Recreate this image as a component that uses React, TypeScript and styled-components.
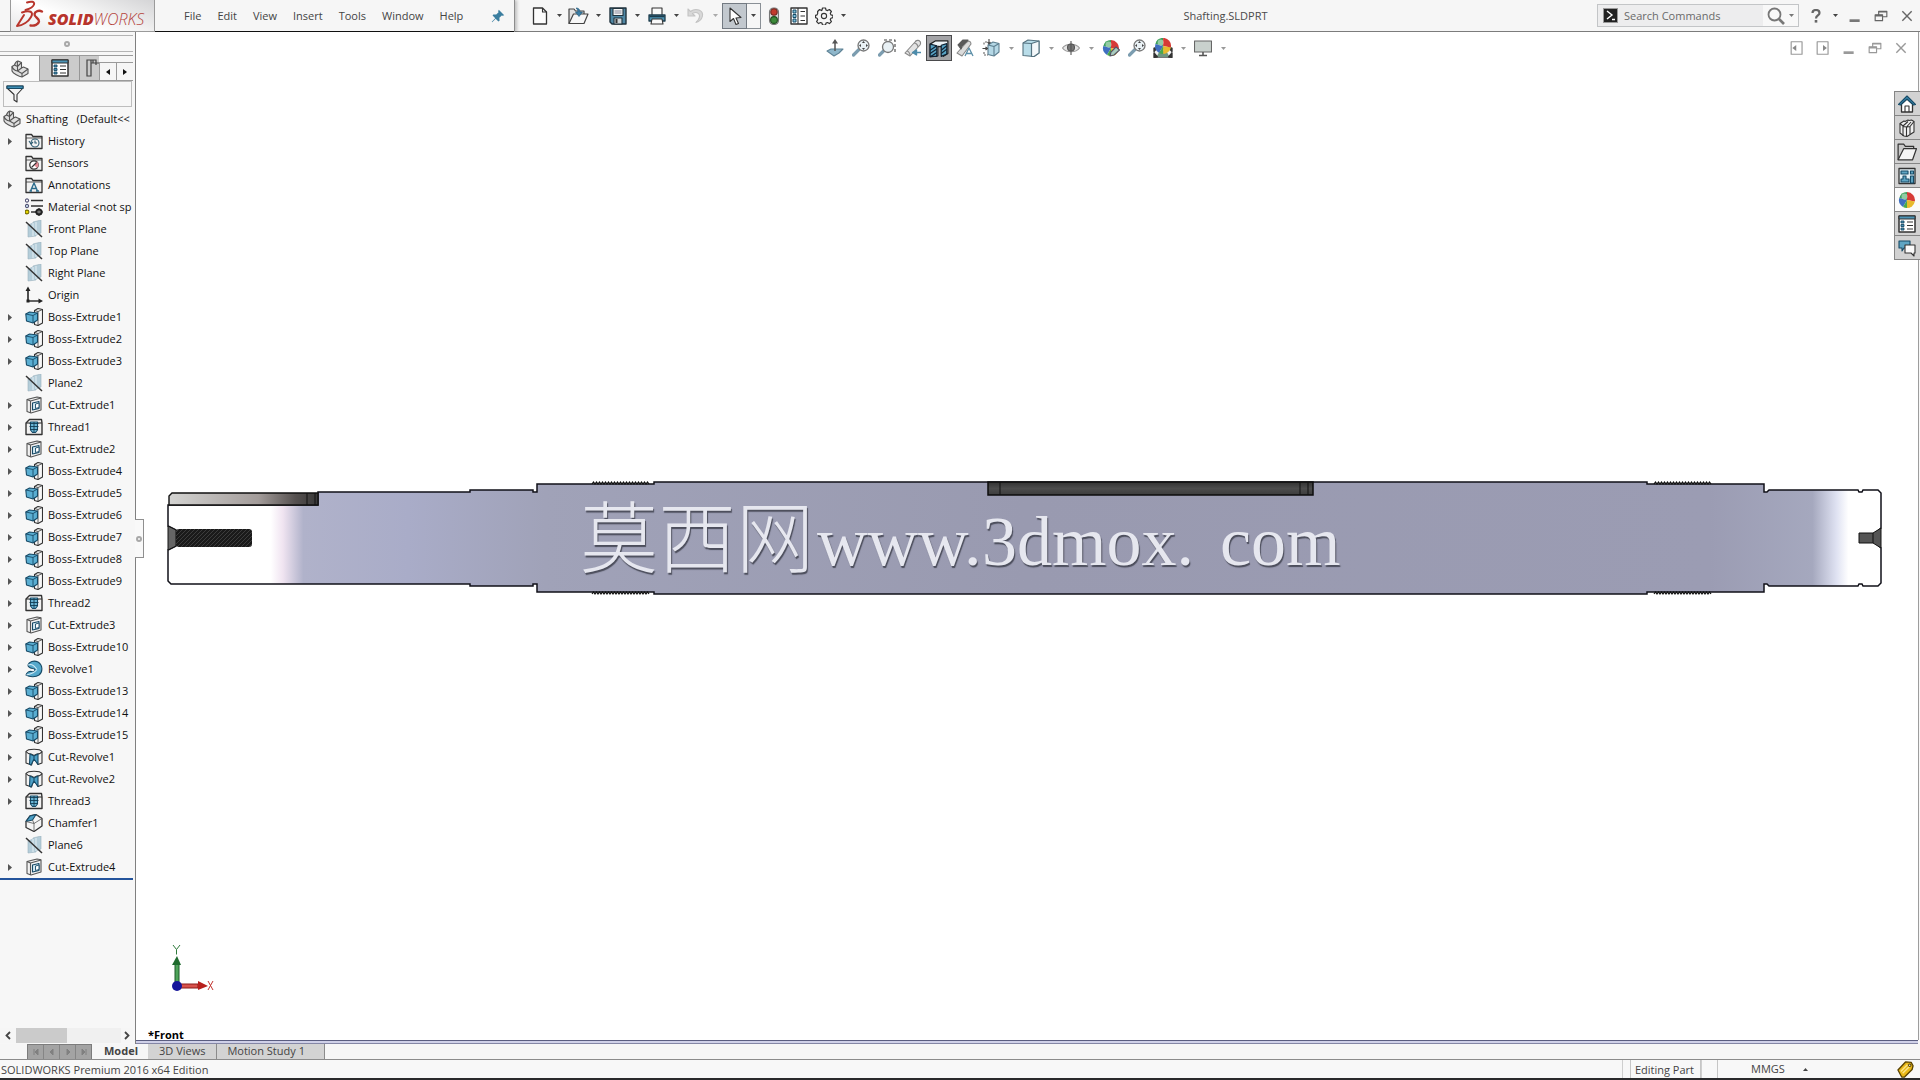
import React from "react";
import styled, { createGlobalStyle, css } from "styled-components";

const GlobalStyle = createGlobalStyle`
  * { box-sizing: border-box; }
  html, body { margin: 0; padding: 0; }
  body {
    background: #f7f7f7;
    color: #1c1c1c;
    font-family: "Open Sans", "Noto Sans", sans-serif;
    font-size: 11px;
    line-height: 16px;
    overflow: hidden;
  }
  button, input { font: inherit; color: inherit; }
  svg { display: block; flex: none; }
`;

/* ---------- shell ---------- */

const Shell = styled.div`
  display: flex;
  flex-direction: column;
  height: 100vh;
  border-bottom: 2px solid #2a2a2c;
`;

const TopBar = styled.header`
  display: flex;
  align-items: stretch;
  height: 32px;
  background: #f6f6f6;
  border-bottom: 1px solid #7c7c7c;
  flex: none;
`;

const MenuPanel = styled.div`
  display: flex;
  align-items: stretch;
  width: 515px;
  margin-bottom: -1px;
  padding-left: 10px;
  border-right: 1px solid #8c8c8c;
  box-shadow: 2px 0 3px rgba(0, 0, 0, 0.22);
  flex: none;
`;

const Brand = styled.div`
  width: 145px;
  border: solid #9a9a9a;
  border-width: 0 1px 1px;
  background: linear-gradient(200deg, #d4d4d6 0%, #f2f2f2 40%, #ffffff 60%, #e6e6e7 100%);
  flex: none;
`;

const MenuList = styled.nav`
  display: flex;
  align-items: center;
  flex: 1;
  padding-left: 21px;
  border-bottom: 1px solid #101010;
`;

const PlainButton = styled.button`
  display: flex;
  align-items: center;
  justify-content: center;
  padding: 0;
  border: 0;
  background: transparent;
`;

const MenuButton = styled(PlainButton)`
  padding: 0 8px;
  color: #444;
`;

const PinButton = styled(PlainButton)`
  width: 26px;
  margin-left: 14px;
`;

const QuickBar = styled.div`
  display: flex;
  align-items: center;
  padding-left: 12px;
  flex: 1;
`;

const ToolButton = styled(PlainButton)<{ $active?: boolean }>`
  width: 25px;
  height: 26px;
  ${(p) => p.$active && css`
    background: #c2c8ce;
    border: 1px solid #737a82;
  `}
`;

const CaretButton = styled(PlainButton)<{ $boxed?: boolean }>`
  width: 14px;
  height: 26px;
  ${(p) => p.$boxed && css`
    border: 1px solid #8a9096;
    border-left: 0;
  `}
`;

const DocTitle = styled.h1`
  margin: 0;
  padding-left: 4px;
  width: 830px;
  font-size: 11px;
  font-weight: 400;
  line-height: 31px;
  color: #4a4a4a;
  flex: 0 1 auto;
  text-align: center;
`;

const TopRight = styled.div`
  display: flex;
  align-items: center;
  justify-content: flex-end;
  flex: 1;
`;

const SearchBox = styled.label`
  display: flex;
  align-items: center;
  width: 202px;
  height: 23px;
  padding-left: 5px;
  border: 1px solid #c3c5c7;
  background: #ededee;
  margin-right: 4px;
`;

const SearchInput = styled.input`
  flex: 1;
  min-width: 0;
  padding: 0 0 0 6px;
  border: 0;
  outline: 0;
  background: transparent;
  &::placeholder { color: #6a6a6a; opacity: 1; }
`;

const SearchGo = styled(PlainButton)`
  height: 21px;
  padding: 0 4px;
  gap: 4px;
  background: #f8f8f8;
`;

const WindowButton = styled(PlainButton)<{ $w?: number }>`
  width: ${(p) => p.$w ?? 26}px;
  height: 26px;
`;

/* ---------- body ---------- */

const Body = styled.div`
  display: flex;
  flex: 1;
  min-height: 0;
`;

const SidePanel = styled.aside`
  display: flex;
  flex-direction: column;
  width: 136px;
  margin-bottom: -4px;
  border-right: 1px solid #808080;
  padding-right: 2px;
  background: #f7f7f7;
  flex: none;
`;

const PanelGrip = styled.div`
  display: flex;
  align-items: center;
  justify-content: center;
  height: 17px;
  margin: 3px 0;
  border: solid #b4b4b4;
  border-width: 1px 0;
  flex: none;
`;

const GripDot = styled.span`
  width: 6px;
  height: 6px;
  border: 2px solid #a8a8a8;
  border-radius: 50%;
`;

const PanelTabs = styled.div`
  display: flex;
  height: 26px;
  border-top: 1px solid #9b9b9b;
  flex: none;
`;

const PanelTab = styled(PlainButton)<{ $selected?: boolean }>`
  width: ${(p) => (p.$selected ? 39 : 40)}px;
  background: ${(p) => (p.$selected ? "#f9f9f9" : "#cbcbcb")};
  ${(p) => !p.$selected && css`
    border-left: 1px solid #969696;
    border-bottom: 1px solid #969696;
  `}
`;

const CutTab = styled(PanelTab)`
  width: 20px;
  justify-content: flex-end;
  overflow: hidden;
`;

const TabScroll = styled.div`
  display: flex;
  flex: 1;
  margin-top: 6px;
  border: solid #9a9a9a;
  border-width: 1px 0;
`;

const TabScrollButton = styled(PlainButton)`
  flex: 1;
  border-left: 1px solid #9a9a9a;
  background: #f6f6f6;
`;

const FilterBox = styled.label`
  display: flex;
  align-items: center;
  height: 26px;
  margin: 0 1px 1px 3px;
  padding-left: 2px;
  border: 1px solid #bdbdbd;
  flex: none;
`;

const FilterInput = styled.input`
  flex: 1;
  min-width: 0;
  border: 0;
  outline: 0;
  background: transparent;
`;

const Tree = styled.ul`
  margin: 0;
  padding: 0;
  list-style: none;
  border-bottom: 2px solid #24549c;
  overflow: hidden;
  flex: none;
`;

const TreeRow = styled.li<{ $root?: boolean }>`
  display: flex;
  align-items: center;
  height: 22px;
  padding-left: ${(p) => (p.$root ? 3 : 5)}px;
  white-space: pre;
  gap: 5px;
  color: #111;
`;

const Twisty = styled(PlainButton)`
  width: 15px;
  height: 16px;
  justify-content: flex-start;
  padding-left: 3px;
  flex: none;
`;

const HScroll = styled.div`
  display: flex;
  height: 15px;
  margin-top: auto;
  margin-bottom: 1px;
  background: #f0f0f0;
  flex: none;
`;

const HScrollThumb = styled.div`
  width: 51px;
  background: #cbcbcb;
  margin-right: auto;
`;

const HScrollButton = styled(PlainButton)`
  width: 16px;
  background: #f6f6f6;
  &:last-child { width: 12px; }
`;

const Viewport = styled.main`
  position: relative;
  flex: 1;
  min-width: 0;
  margin-right: 1px;
  border-right: 1px solid #9d9d9d;
  background: #fff;
`;

const Model = styled.svg`
  width: 100%;
  height: 100%;
`;

const Watermark = styled.g`
  fill: #e6e7ef;
  text-shadow: 1px 2px 1px #4c4e5c;
`;

const HudBar = styled.div`
  position: absolute;
  top: 3px;
  left: 0;
  right: 2px;
  display: flex;
  justify-content: center;
`;

const HudButton = styled(PlainButton)<{ $active?: boolean }>`
  width: 26px;
  height: 26px;
  ${(p) => p.$active && css`
    background: #a3a3a6;
    border: 1px solid #4a4a4c;
  `}
`;

const DocControls = styled.div`
  position: absolute;
  top: 3px;
  right: 4px;
  display: flex;
`;

const TaskTabs = styled.div`
  position: absolute;
  top: 59px;
  right: -2px;
  width: 26px;
  border: solid #858585;
  border-width: 1px 0 0 1px;
`;

const TaskTab = styled(PlainButton)<{ $selected?: boolean }>`
  width: 25px;
  height: 24px;
  padding-right: 2px;
  border-bottom: 1px solid #858585;
  background: ${(p) => (p.$selected ? "#fbfbfb" : "#d2d2d2")};
`;

const SideHandle = styled.button`
  position: absolute;
  left: -1px;
  top: calc(50% - 17px);
  width: 9px;
  height: 39px;
  padding: 0;
  display: flex;
  align-items: center;
  justify-content: center;
  border: 1px solid #8f8f8f;
  border-left: 0;
  background: #f9f9f9;
`;

const ViewName = styled.div`
  position: absolute;
  left: 12px;
  bottom: 0;
  font-weight: 700;
  line-height: 11px;
  color: #000;
`;

/* ---------- bottom ---------- */

const SplitLine = styled.div`
  height: 4px;
  margin: 0 2px 0 136px;
  border-top: 1px solid #5a5d80;
  border-bottom: 1px solid #8486a5;
  background: #cfd0e8;
  flex: none;
`;

const StudyTabs = styled.div`
  display: flex;
  height: 15px;
  padding-left: 27px;
  background: #f6f6f6;
  flex: none;
`;

const StudyNav = styled.div`
  display: flex;
  gap: 1px;
  width: 65px;
  border: 1px solid #7c7c7c;
  border-bottom-width: 0;
  background: #858585;
`;

const StudyNavButton = styled(PlainButton)`
  flex: 1;
  background: #a3a3a3;
`;

const StudyTab = styled(PlainButton)<{ $selected?: boolean }>`
  padding: 0 11px 2px;
  color: #444;
  ${(p) => p.$selected
    ? css`
        padding-left: 12px;
        padding-right: 10px;
        font-weight: 700;
      `
    : css`
        background: #d3d3d3;
        border-right: 1px solid #8b8b8b;
      `}
  &:last-child { padding-right: 19px; padding-left: 10px; }
`;

const StatusBar = styled.footer`
  display: flex;
  align-items: stretch;
  height: 19px;
  padding-left: 1px;
  border-top: 1px solid #8b8b8b;
  line-height: 20px;
  color: #444;
  background: #f8f8f8;
  flex: none;
`;

const StatusText = styled.span`
  flex: 1;
`;

const StatusCell = styled.span`
  padding: 0 6px 0 4px;
  border: solid #c6c6c6;
  border-width: 0 1px;
`;

const StatusGap = styled.span<{ $w: number }>`
  width: ${(p) => p.$w}px;
  border-left: 1px solid #cfcfcf;
`;

const UnitsButton = styled(PlainButton)`
  width: 124px;
  gap: 18px;
  border-left: 1px solid #c6c6c6;
`;

const TagButton = styled(PlainButton)`
  width: 22px;
  margin: 0 4px 0 53px;
`;

/* ---------- icons ---------- */

type Draw = { children: React.ReactNode; s?: number };
const Ico = ({ children, s = 18 }: Draw) => (
  <svg width={s} height={s} viewBox="0 0 18 18" fill="none" stroke="#333" strokeWidth="1.1" strokeLinejoin="round" aria-hidden="true">
    {children}
  </svg>
);

const Caret = ({ color = "#444", up = false }: { color?: string; up?: boolean }) => (
  <svg width="5" height="3" viewBox="0 0 5 3" aria-hidden="true">
    <path d={up ? "M0 3h5L2.500 0z" : "M0 0h5L2.500 3z"} fill={color} />
  </svg>
);

const PartIcon = () => (
  <Ico>
    <path d="M1 6.500L3.500 5C4 3 5 1.500 7 1l3.500 1.500V8l2-1 4.500 2v4.500L11 17c-3-.5-9-3.500-10-6z" fill="#e0e0e0" stroke="#555" />
    <path d="M3.500 5l3 1.500v4.500M7 1c-1 1.500-1 3.500-.5 5.500l4-4M6.500 11l4-3M1 6.500c1 3 2 4 5.500 4.500l4.500 2.500V17M11 13.500l6-4.500" stroke="#555" />
  </Ico>
);

const FolderIcon = ({ children }: { children: React.ReactNode }) => (
  <Ico>
    <path d="M1 16.500V2.500h5.500L8 4.500h9v12z" fill="#f2f2f2" strokeWidth="1.300" />
    <path d="M1 6h16" strokeWidth="0.800" />
    {children}
  </Ico>
);

const HistoryIcon = () => (
  <FolderIcon>
    <circle cx="10" cy="11" r="4" stroke="#2d5a70" />
    <path d="M10 8.500V11h2M4 9l2 3 2-2" stroke="#2d5a70" />
  </FolderIcon>
);
const SensorIcon = () => (
  <FolderIcon>
    <circle cx="9" cy="11" r="4.200" stroke="#333" fill="#fff" strokeWidth="1.300" />
    <path d="M9 11l3-3.500A4.200 4.200 0 0 1 12 14z" fill="#e58a94" stroke="none" />
    <path d="M6.500 13.500l5-5" />
  </FolderIcon>
);
const AnnotIcon = () => (
  <FolderIcon>
    <path d="M5.500 15L9 7l3.500 8M7 12.500h4M4.500 15h2.500M11 15h3" stroke="#2c6c8c" strokeWidth="1.400" />
  </FolderIcon>
);
const MaterialIcon = () => (
  <Ico>
    <path d="M6 2.500h12M6 8h12M6 14h5" strokeWidth="1.600" />
    <circle cx="2" cy="2.500" r="1.600" fill="#fff" stroke="#557" />
    <circle cx="2" cy="8" r="1.600" fill="#cde6f2" stroke="#557" />
    <circle cx="2" cy="14" r="1.900" fill="#e6d600" stroke="#776d00" />
    <circle cx="14" cy="14" r="2.500" stroke="#222" strokeWidth="2.200" />
    <path d="M14 10v8M10 14h2M16 14h2" stroke="#222" strokeWidth="1.200" />
  </Ico>
);
const PlaneIcon = () => (
  <Ico>
    <path d="M3 5l5-2v-1l8-2v13l-5 2v1l-8 1z" fill="#b4cdd9" stroke="#98b0bd" strokeWidth="0.600" />
    <path d="M8 3v13M11 2v13" stroke="#e0ebf0" />
    <path d="M1 2l16 15" strokeWidth="1.500" />
  </Ico>
);
const OriginIcon = () => (
  <Ico>
    <path d="M3 4v11h12" strokeWidth="1.700" />
    <path d="M0.500 5L3 0.500 5.500 5zM13.500 12.500L18 15l-4.500 2.500z" fill="#222" stroke="none" />
    <rect x="1.500" y="13.500" width="3" height="3" fill="#222" stroke="none" />
  </Ico>
);
const BossIcon = () => (
  <Ico>
    <path d="M9.500 2.500L13 .5l4.500 1V15L13 17.500l-3.500-1z" fill="#f7f7f7" />
    <path d="M13 3.500l4.500-2M9.500 2.500l3.500 1v14" strokeWidth="0.800" />
    <path d="M0.800 6L4.500 4l8 1v7L8 15l-6.500-2z" fill="#5aaed2" stroke="#174a66" />
    <path d="M0.800 6L8 7.500V15M8 7.500L12.500 5" stroke="#174a66" strokeWidth="0.900" />
  </Ico>
);
const CutIcon = () => (
  <Ico>
    <path d="M2 3.500L12 1l4 .8V14L6 17l-4-1.500z" fill="#f2f2f2" stroke="#555" />
    <path d="M2 3.500L5.500 5 16 2M5.500 5v12" stroke="#555" />
    <path d="M7.500 7L14 5.500v7L7.500 14z" fill="#d5eaf3" stroke="#174a66" />
    <path d="M10.500 8L14 7v4.500l-3.500 1z" fill="#fff" stroke="#174a66" strokeWidth="0.900" />
  </Ico>
);
const ThreadIcon = () => (
  <Ico>
    <path d="M1 16.500V5l3.500-3.500h12L17 5v11.500z" fill="#f2f2f2" strokeWidth="1.400" />
    <path d="M1 5h16" />
    <path d="M5.500 4h7v8l-2 2.500h-3L5.500 12z" fill="#6bb6d6" stroke="#174a66" />
    <path d="M4.500 5.500h9M4.500 8.500h9M5 11.500h8M9 4v10" stroke="#123c52" strokeWidth="0.900" />
  </Ico>
);
const RevolveIcon = () => (
  <Ico>
    <path d="M3 5C4 1.500 9 0 13 2c5 3 5 10 1 13-3.500 2.500-9.500 2-13 0 .5-2.500 3-4 5.500-3.500 2 .5 3.500 0 3.500-1.500 0-1-1-1.500-2.500-1.500C5 8 3 7 3 5z" fill="#56a9cc" stroke="#174a66" />
    <path d="M3 5c3-1.500 6 0 9 4.500M1.500 15c4-1 8-2 10-5" stroke="#cfeaf6" />
  </Ico>
);
const CutRevolveIcon = () => (
  <Ico>
    <path d="M1 3.500C3 .5 15 .5 17 3.500V15l-4 1.500L9 9l-2.500 8L1 15z" fill="#f2f2f2" />
    <path d="M1 3.500c1.500 2 4 2.500 5 2.500l3 1.500L12 6c2 0 4-.5 5-2.500" />
    <path d="M5 6l4 2v3l-3 6-1.500-1zM13 6L9 8v3l4 5.500z" fill="#4da0c6" stroke="#174a66" />
  </Ico>
);
const ChamferIcon = () => (
  <Ico>
    <path d="M1 7.500L5 2l6-1.500 6 4V12l-8 5.500-8-4z" fill="#f5f5f5" strokeWidth="1.300" />
    <path d="M1 7.500L5 2l6-1.500L7.500 6z" fill="#4da0c6" stroke="#174a66" />
    <path d="M11 .5l6 4-8 5-1.500-3.500M9 9.500v8M1 7.500l8 2" stroke="#555" strokeWidth="0.800" />
  </Ico>
);
const ListIcon = () => (
  <Ico>
    <rect x="1" y="1" width="16" height="16" fill="#fff" strokeWidth="1.500" />
    <rect x="1" y="1" width="16" height="3" fill="#4b94b6" strokeWidth="1" />
    <path d="M9 7h6M9 10.500h6M9 14h6" />
    <path d="M3 6h3v2H3zM3 9.500h3v2H3zM3 13h3v2H3z" fill="#4b94b6" stroke="#174a66" strokeWidth="0.900" />
  </Ico>
);
const OptionsIcon = () => (
  <Ico>
    <rect x="1" y="1" width="16" height="16" fill="#fff" strokeWidth="1.400" />
    <path d="M8 1v16M10.500 4.500h4.500M10.500 9h4.500M10.500 13.500h4.500" />
    <path d="M3 3h3v3H3zM3 7.500h3v3H3zM3 12h3v3H3z" fill="#7fc1db" stroke="#174a66" strokeWidth="1" />
  </Ico>
);
const FilterIcon = () => (
  <Ico>
    <path d="M1 1h16v2l-6 6.500V17l-3-2V9.500L1 3z" fill="#f4f4f4" />
    <path d="M1 1h16v2.500H1z" fill="#3f8fb5" stroke="#174a66" />
  </Ico>
);
const DimIcon = () => (
  <svg width="13" height="18" viewBox="0 0 13 18" fill="none" stroke="#444" strokeWidth="1.200" aria-hidden="true">
    <path d="M1 1h4v16H1zM5 4h8M5 1h5v5M7 1v3" />
  </svg>
);

const NewIcon = () => (
  <Ico>
    <path d="M2.500 1h9l4 4v12h-13z" fill="#fcfcfc" strokeWidth="1.300" />
    <path d="M11.500 1v4h4" />
  </Ico>
);
const OpenIcon = () => (
  <svg width="21" height="18" viewBox="0 0 21 18" fill="none" stroke="#444" strokeWidth="1.200" strokeLinejoin="round" aria-hidden="true">
    <path d="M1 16.500V2h5l1.500 2H16v4" fill="#e2e2e2" />
    <path d="M1 16.500L5.500 7H20l-4 9.500z" fill="#f7f7f7" />
    <path d="M8 1c3 0 4 2 4 4h2.500L11 9.500 7.500 5H10c0-2-1-3-2-4z" fill="#3b7ea6" stroke="#2a5f80" strokeWidth="0.700" />
  </svg>
);
const SaveIcon = () => (
  <Ico>
    <path d="M1 1h16v16H3l-2-2z" fill="#4f87a4" stroke="#20323d" strokeWidth="1.400" />
    <rect x="4" y="1.500" width="10" height="7" fill="#f5f5f5" stroke="#20323d" />
    <path d="M5.500 4h7M5.500 6h7" stroke="#889" />
    <rect x="5" y="11" width="8" height="6" fill="#cfd6da" stroke="#20323d" />
    <path d="M7.500 12v4" strokeWidth="2" />
  </Ico>
);
const PrintIcon = () => (
  <Ico>
    <path d="M4 8V1h10v7" fill="#fafafa" />
    <path d="M1 8h16v6H1z" fill="#4c92b2" stroke="#1d3c4c" strokeWidth="1.300" />
    <path d="M4 12h10l1 5H3z" fill="#fafafa" />
    <path d="M1.500 9.500h15" stroke="#1d3c4c" strokeWidth="1.500" />
  </Ico>
);
const UndoIcon = () => (
  <Ico>
    <path d="M1 2v7h7L5.500 6.500C10 4 15 7 11 13l-2 2.500c7-2 9-10 3-12.500C9 2 6 2.500 3.500 4.500z" fill="#d8d8d8" stroke="#c4c4c4" />
  </Ico>
);
const CursorIcon = () => (
  <Ico>
    <path d="M4 1v13.500l3.500-3 2.500 6 2.500-1-2.500-5.500 5-.5z" fill="#fff" stroke="#333" />
  </Ico>
);
const LightIcon = () => (
  <Ico>
    <rect x="4.500" y="1" width="9" height="16.500" rx="4" fill="#d6d6d6" stroke="#777" />
    <circle cx="9" cy="5" r="3.200" fill="#c33a2c" stroke="#70261e" />
    <circle cx="9" cy="13" r="3.400" fill="#3d8a3a" stroke="#1f4f1e" />
  </Ico>
);
const GearIcon = () => (
  <Ico>
    <path d="M7.500 1h3l.5 2 1.500.6 1.900-1.100 2 2-1.100 1.900.6 1.500 2 .5v2.200l-2 .6-.6 1.500 1.100 1.900-2 2-1.900-1.100-1.500.6-.5 2h-3l-.5-2-1.500-.6-1.900 1.100-2-2 1.100-1.900-.6-1.500-1.600-.6V8.400l1.600-.5.6-1.500L2.600 4.500l2-2 1.900 1.100L7 3z" strokeWidth="1.200" />
    <circle cx="9" cy="9" r="2.600" />
  </Ico>
);
const PinIcon = () => (
  <Ico s={14}>
    <path d="M10 1l7 7-2 .8-1.200-.5-3 3 .2 3.700-1.500 1L6 12.500 1.500 17 1 16.500 5.500 12 2 8.500l1-1.500 3.700.2 3-3L9.200 3z" fill="#3b7e9f" stroke="none" />
  </Ico>
);

const NormalToIcon = () => (
  <Ico>
    <path d="M1 12l4-2h12l-4 4L8 17z" fill="#8fb7cb" stroke="#5f8396" />
    <path d="M9 12V2" strokeWidth="1.500" stroke="#555" />
    <path d="M6 4.500L9 0l3 4.500z" fill="#555" stroke="none" />
  </Ico>
);
const Lens = ({ dashed = false }: { dashed?: boolean }) => (
  <Ico>
    {dashed && <path d="M6 1h11v12" stroke="#444" strokeDasharray="3 2" />}
    <path d="M1.500 16L7 10.500" stroke="#7c9db0" strokeWidth="3.200" strokeLinecap="round" />
    <circle cx={dashed ? 10 : 11.5} cy={dashed ? 8 : 6.5} r="5.500" fill="#e9f1f5" stroke="#777" strokeWidth="1.300" />
    {!dashed && <path d="M11.500 2l1.500 2h-3zM11.500 11l1.500-2h-3zM7 6.500l2-1.500v3zM16 6.500l-2-1.500v3z" fill="#444" stroke="none" />}
  </Ico>
);
const PrevViewIcon = () => (
  <Ico>
    <path d="M1 14L11 3c1-2 4-2 4.500-1 1.500 1 1 3 .5 4L6 17z" fill="#e3e3e3" stroke="#888" />
    <path d="M3 12c1 0 3 2 3 4M10 4c2 0 4 2 4 4" stroke="#888" />
    <path d="M17 13.500h-6M12.500 11l-4 2.500 4 2.500z" fill="#4d8cab" stroke="#4d8cab" strokeWidth="1.400" />
  </Ico>
);
const SectionIcon = () => (
  <Ico s={20}>
    <path d="M1 5.500l5-3h11V14l-4 2.500V8L8 7.500V16l-7 1z" fill="#eef3f6" stroke="#222" />
    <path d="M1 5.500L7 7v9.500H1zM11 6.500l5-1.500v9.500l-5 2z" fill="#58a3c4" stroke="#123" />
    <path d="M1 11l6-4M1 14l6-4M2 16.500l5-3.500M11 11l5-4M11 14l5-4" stroke="#123" />
  </Ico>
);
const AnnoViewIcon = () => (
  <Ico>
    <path d="M1 14L10 4c2-3 5-2 5 1L6 17z" fill="#dcdcdc" stroke="#888" />
    <path d="M2 6l5-5h5L6 7l-1 3z" fill="#5a5a5a" stroke="#5a5a5a" />
    <path d="M9 17l4-8 4 8M10.500 14.500h5" stroke="#5c8fa8" strokeWidth="1.300" />
  </Ico>
);
const OrientIcon = () => (
  <Ico>
    <path d="M6 6l5-3 6 1.500V13l-5 4-6-1.500z" fill="#b5d8e6" stroke="#5d7f90" />
    <path d="M6 6l6 1.500 5-3M12 7.500V17" stroke="#5d7f90" />
    <path d="M7 0v4M0.500 9.500h4M5.500 3L7 5l1.500-2M3.500 8l2 1.500-2 1.500" stroke="#444" />
    <path d="M2 3.500v3M2 13v3h4M3 3h3" stroke="#666" strokeDasharray="2 1" />
  </Ico>
);
const DisplayIcon = () => (
  <Ico>
    <path d="M1 4l5-3 11 1v12l-5 3.500-11-1z" fill="#b9dde9" stroke="#55727f" />
    <path d="M9.500 4.500L17 2v12l-5 3.500H9.500z" fill="#f4f8fa" stroke="#55727f" />
    <path d="M1 4l8.500.5v13" stroke="#55727f" />
  </Ico>
);
const EyeIcon = () => (
  <Ico>
    <path d="M0.500 9C4 4 14 4 17.500 9 14 14 4 14 .5 9z" fill="#e6e6e6" stroke="#999" />
    <circle cx="9" cy="8.500" r="3.500" fill="#777" stroke="#555" />
    <path d="M9 2v14" stroke="#555" />
  </Ico>
);
const Ball = ({ small = false }: { small?: boolean }) => (
  <g stroke="none" transform={small ? "translate(1 -1) scale(.9)" : undefined}>
    <path d="M9 9V1a8 8 0 0 0-7.700 6z" fill="#3aa05a" />
    <path d="M9 1a8 8 0 0 1 7.800 9.500L9 9z" fill="#d63a35" />
    <path d="M16.800 10.500A8 8 0 0 1 9 17V9z" fill="#e8b92c" />
    <path d="M5 16A8 8 0 0 1 1.300 7L9 9z" fill="#3f6fc0" />
    <path d="M9 17a8 8 0 0 1-4-1l4-7z" fill="#48a84e" />
    <circle cx="6.500" cy="5.500" r="3" fill="#fff" opacity="0.450" />
  </g>
);
const AppearanceIcon = () => (
  <Ico>
    <Ball />
    <path d="M8 17l1-4 5-5 3.500 3-5.500 5z" fill="#a9cdbf" stroke="#556" />
  </Ico>
);
const SceneIcon = () => (
  <Ico s={20}>
    <path d="M1 9h16v8.500H1z" fill="#f1f1f1" stroke="#777" />
    <path d="M3 17L6 12h6l3 5z" fill="#6f9580" stroke="none" />
    <path d="M1 17.500v-4l3 3.500zM17 17.500v-4l-3 3.500zM1 9h3L1 12zM17 9h-3l3 3z" fill="#333" stroke="#333" />
    <Ball small />
  </Ico>
);
const MonitorIcon = () => (
  <Ico>
    <rect x="0.500" y="2" width="17" height="11" fill="#c9d1cd" stroke="#666" />
    <path d="M9 13v3M5 16.500h8" stroke="#555" strokeWidth="1.600" />
  </Ico>
);
const BallIcon = () => (<Ico><Ball /></Ico>);

const HomeIcon = () => (
  <Ico>
    <path d="M3.500 9v8h11V9L9 4z" fill="#fff" strokeWidth="1.300" />
    <path d="M0.500 9.500L9 1l8.500 8.500-2 .5L9 4 2.500 10z" fill="#3f8fb5" stroke="#174a66" />
    <path d="M7 17v-6h4v6" />
  </Ico>
);
const BooksIcon = () => (
  <Ico>
    <path d="M2 4.500L6 2l1 .5L10 1l1 .5L13.500 1 16 2.500V13l-7 4.500-3-.5-4-3z" fill="#f0f0f0" />
    <path d="M2 4.500L5 7v10M5 7l5-4.500M5.500 7.500L8.500 8v9M8.500 8l4.500-5M9 8l3-.5V15M12 7.500L16 2.500" />
  </Ico>
);
const FolderOpenIcon = () => (
  <Ico s={20}>
    <path d="M1 16V2h5l1.500 2H15v2" fill="#c9c9c9" />
    <path d="M1 16L6 6h11.500L14 16z" fill="#f4f4f4" />
  </Ico>
);
const PaletteIcon = () => (
  <Ico>
    <rect x="1" y="1.500" width="16" height="15" fill="#e6f2f7" strokeWidth="1.300" />
    <path d="M3 4h7v3H3zM12.500 4h3v3h-3zM5 9h3v3h3v3H3v-3h2zM12.500 9h3v7h-3z" fill="#5fa5c3" stroke="#174a66" />
  </Ico>
);
const ForumIcon = () => (
  <Ico>
    <path d="M1 2h11v7H6l-2 3V9H1z" fill="#5fa5c3" stroke="#174a66" />
    <path d="M7 6h10v8h-1v3l-3-3H7z" fill="#fafafa" />
  </Ico>
);
const TagIcon = () => (
  <Ico s={17}>
    <path d="M1 9.500L9 1l6 .5 2 3.500-1 4-8 8H5z" fill="#eab818" stroke="#5a4300" strokeWidth="1.400" />
    <path d="M4 11l7-7M6 13l7-7" stroke="#fbe58b" strokeWidth="1.500" />
    <circle cx="13.500" cy="4.500" r="1.300" fill="#fff" stroke="#5a4300" />
  </Ico>
);

const MinIcon = ({ c }: { c: string }) => (
  <Ico s={14}><path d="M2 15h13" stroke={c} strokeWidth="3.500" /></Ico>
);
const RestoreIcon = ({ c }: { c: string }) => (
  <Ico s={14}>
    <path d="M1.500 7.500h9.500v7.500H1.500zM6 7V3h10.500v7H11.500" stroke={c} strokeWidth="1.500" />
    <path d="M6 3.500h10.500M1.500 8.500h9.500" stroke={c} strokeWidth="2" />
  </Ico>
);
const CloseIcon = ({ c }: { c: string }) => (
  <Ico s={14}><path d="M3 3l12 12M15 3L3 15" stroke={c} strokeWidth="1.800" /></Ico>
);
const DockIcon = ({ right = false }: { right?: boolean }) => (
  <Ico s={14}>
    <rect x="1.500" y="1" width="14" height="16" stroke="#999" strokeWidth="1.500" />
    <path d={right ? "M9 5l5 4-5 4z" : "M8 5L3 9l5 4z"} fill="#888" stroke="none" />
  </Ico>
);

const BrandMark = () => (
  <svg width="143" height="31" viewBox="11 0 143 31" role="img" aria-label="SOLIDWORKS">
    <g fill="none" stroke="#b8352c" strokeLinecap="round" strokeLinejoin="round">
      <path d="M27 2.500c4-1.500 8-1 7 2s-5 4.500-8.500 5.500" strokeWidth="2" />
      <path d="M22 12.500c8-3 12-.5 9 4.500-2.500 4.500-8 8.500-14 9L24 15" strokeWidth="2" />
      <path d="M42 11.500c-3-1.500-7-.5-7.500 2.500-.5 3.500 5 4 4.500 7.500-.5 3-4.500 4.500-8.500 4" strokeWidth="2.400" />
    </g>
    <g fontFamily='"Open Sans", sans-serif' fontSize="16" fontStyle="italic">
      <text x="48" y="25" fontWeight="800" fill="#b8352c">
        SOLID<tspan fontWeight="300" fill="#b5453d">WORKS</tspan>
      </text>
    </g>
  </svg>
);

/* ---------- data ---------- */

const icons = {
  history: HistoryIcon, sensors: SensorIcon, annot: AnnotIcon, material: MaterialIcon,
  plane: PlaneIcon, origin: OriginIcon, boss: BossIcon, cut: CutIcon, thread: ThreadIcon,
  revolve: RevolveIcon, cutrev: CutRevolveIcon, chamfer: ChamferIcon,
};

type Node = [keyof typeof icons, string, boolean];
const nodes: Node[] = [
  ["history", "History", true],
  ["sensors", "Sensors", false],
  ["annot", "Annotations", true],
  ["material", "Material <not sp", false],
  ["plane", "Front Plane", false],
  ["plane", "Top Plane", false],
  ["plane", "Right Plane", false],
  ["origin", "Origin", false],
  ["boss", "Boss-Extrude1", true],
  ["boss", "Boss-Extrude2", true],
  ["boss", "Boss-Extrude3", true],
  ["plane", "Plane2", false],
  ["cut", "Cut-Extrude1", true],
  ["thread", "Thread1", true],
  ["cut", "Cut-Extrude2", true],
  ["boss", "Boss-Extrude4", true],
  ["boss", "Boss-Extrude5", true],
  ["boss", "Boss-Extrude6", true],
  ["boss", "Boss-Extrude7", true],
  ["boss", "Boss-Extrude8", true],
  ["boss", "Boss-Extrude9", true],
  ["thread", "Thread2", true],
  ["cut", "Cut-Extrude3", true],
  ["boss", "Boss-Extrude10", true],
  ["revolve", "Revolve1", true],
  ["boss", "Boss-Extrude13", true],
  ["boss", "Boss-Extrude14", true],
  ["boss", "Boss-Extrude15", true],
  ["cutrev", "Cut-Revolve1", true],
  ["cutrev", "Cut-Revolve2", true],
  ["thread", "Thread3", true],
  ["chamfer", "Chamfer1", false],
  ["plane", "Plane6", false],
  ["cut", "Cut-Extrude4", true],
];

const menus = ["File", "Edit", "View", "Insert", "Tools", "Window", "Help"];

const quickTools: [string, () => React.JSX.Element][] = [
  ["New", NewIcon], ["Open", OpenIcon], ["Save", SaveIcon], ["Print", PrintIcon], ["Undo", UndoIcon],
];

const hudTools: { name: string; icon: React.ReactNode; menu?: boolean; active?: boolean }[] = [
  { name: "Normal To", icon: <NormalToIcon /> },
  { name: "Zoom to Fit", icon: <Lens /> },
  { name: "Zoom to Area", icon: <Lens dashed /> },
  { name: "Previous View", icon: <PrevViewIcon /> },
  { name: "Section View", icon: <SectionIcon />, active: true },
  { name: "Dynamic Annotation Views", icon: <AnnoViewIcon /> },
  { name: "View Orientation", icon: <OrientIcon />, menu: true },
  { name: "Display Style", icon: <DisplayIcon />, menu: true },
  { name: "Hide/Show Items", icon: <EyeIcon />, menu: true },
  { name: "Edit Appearance", icon: <AppearanceIcon /> },
  { name: "Magnify", icon: <Lens /> },
  { name: "Apply Scene", icon: <SceneIcon />, menu: true },
  { name: "View Settings", icon: <MonitorIcon />, menu: true },
];

const taskTabs: [string, () => React.JSX.Element][] = [
  ["Resources", HomeIcon], ["Design Library", BooksIcon], ["File Explorer", FolderOpenIcon],
  ["View Palette", PaletteIcon], ["Appearances", BallIcon], ["Custom Properties", ListIcon], ["Forum", ForumIcon],
];

/* ---------- model ---------- */

const AXIS = 538;
const topEdge: [number, number][] = [
  [318, 492], [470, 492], [470, 490], [533, 490], [533, 492], [537, 492], [537, 484],
  [648, 484], [654, 484], [654, 482], [1647, 482], [1647, 484], [1653, 484], [1653, 484],
  [1764, 484], [1764, 492], [1767, 492], [1769, 490], [1858, 490], [1859, 492],
  [1862, 492], [1863, 490], [1878, 490], [1881, 493], [1881, 528],
];
const bottomEdge = topEdge.map(([x, y]): [number, number] => [x, 2 * AXIS - y]).reverse();
const pts = (list: [number, number][]) => list.map(([x, y]) => `${x} ${y}`).join("L");
const outline = `M168 505L318 505L${pts(topEdge)}L1875 534L1875 542L${pts(bottomEdge)}L171 584L168 581L168 550L176 546L176 530L168 526Z`;

const teeth = (x0: number, x1: number, y: number) => {
  let d = `M${x0} ${y}`;
  for (let x = x0; x < x1; x += 3) d += `l1.500 -2l1.500 2`;
  return d;
};

const Shaft = () => (
  <Model viewBox="136 32 1782 1008" role="img" aria-label="Shaft section">
    <defs>
      <linearGradient id="body" gradientUnits="userSpaceOnUse" x1="168" y1="520" x2="1881" y2="520">
        <stop offset="0" stopColor="#fff" />
        <stop offset="0.060" stopColor="#fff" />
        <stop offset="0.067" stopColor="#f0e4f1" />
        <stop offset="0.079" stopColor="#b0b2ca" />
        <stop offset="0.140" stopColor="#a9acc8" />
        <stop offset="0.220" stopColor="#a0a2b8" />
        <stop offset="0.500" stopColor="#999ab0" />
        <stop offset="0.900" stopColor="#9b9cb3" />
        <stop offset="0.960" stopColor="#a5a8be" />
        <stop offset="0.974" stopColor="#dfe2f2" />
        <stop offset="0.981" stopColor="#fff" />
      </linearGradient>
      <linearGradient id="slot" x1="0" x2="1" y1="0" y2="0">
        <stop offset="0" stopColor="#d4d4d2" />
        <stop offset="0.600" stopColor="#a39c9a" />
        <stop offset="0.850" stopColor="#55504f" />
        <stop offset="1" stopColor="#383838" />
      </linearGradient>
      <linearGradient id="key" x1="0" x2="0" y1="0" y2="1">
        <stop offset="0" stopColor="#333" />
        <stop offset="0.500" stopColor="#4c4c4c" />
        <stop offset="1" stopColor="#3c3c3c" />
      </linearGradient>
      <pattern id="thread" width="4" height="4" patternUnits="userSpaceOnUse">
        <rect width="4" height="4" fill="#1a1a1a" />
        <path d="M0 4L4 0" stroke="#3c3c3c" />
      </pattern>
    </defs>
    <path d={outline} fill="url(#body)" stroke="#101018" strokeWidth="1.500" />
    <path d="M169 505V496l3-3h146v12z" fill="url(#slot)" stroke="#111" strokeWidth="1.400" />
    <path d="M307 493v12M315 493v12" stroke="#111" />
    <path d="M988 482h325v13H988z" fill="url(#key)" stroke="#0c0c0c" strokeWidth="1.500" />
    <path d="M1000 482v13M1300 482v13M1308 482v13" stroke="#111" />
    <path d="M168 526l8 4v16l-8 4z" fill="#666" stroke="#111" />
    <rect x="176" y="529" width="76" height="18" rx="3" fill="url(#thread)" />
    <path d="M1881 528l-8 5h-14v10h14l8 5z" fill="#555" stroke="#111" />
    <path d="M1873 533v10" stroke="#111" />
    <g fill="none" stroke="#111" strokeWidth="1.200">
      <path d={teeth(592, 648, 484)} />
      <path d={teeth(592, 648, 594)} />
      <path d={teeth(1654, 1710, 484)} />
      <path d={teeth(1654, 1710, 594)} />
    </g>
    <Watermark>
      <text x="580" y="567" fontFamily='"Noto Sans CJK SC", sans-serif' fontWeight="300" fontSize="78">莫西网</text>
      <g fontFamily='"Liberation Serif", "Noto Sans CJK SC", serif' fontSize="70">
        <text x="817" y="565">www.</text>
        <text x="982" y="565">3dmox.</text>
        <text x="1220" y="565">com</text>
      </g>
    </Watermark>
    <g>
      <path d="M175 984v-20h4v20z" fill="#4da359" stroke="#1f5a2a" />
      <path d="M172 965l5-9 4 9z" fill="#1f6a2e" />
      <path d="M178 984h20v4h-20z" fill="#d8524c" stroke="#8c1a18" />
      <path d="M198 981l10 5-10 4z" fill="#b81f1c" />
      <circle cx="177" cy="986" r="5" fill="#15159a" />
      <path d="M173 945l3.500 4.500 3.500-4.500M176.500 949.500v5" stroke="#2f7a3b" fill="none" />
      <path d="M208 981l5 9M213 981l-5 9" stroke="#c3342f" fill="none" />
    </g>
  </Model>
);

/* ---------- app ---------- */

export default function App() {
  return (
    <Shell>
      <GlobalStyle />
      <TopBar>
        <MenuPanel>
          <Brand><BrandMark /></Brand>
          <MenuList aria-label="Main menu">
            {menus.map((m) => <MenuButton key={m}>{m}</MenuButton>)}
            <PinButton aria-label="Pin menu"><PinIcon /></PinButton>
          </MenuList>
        </MenuPanel>
        <QuickBar>
          {quickTools.map(([name, Icon]) => (
            <React.Fragment key={name}>
              <ToolButton aria-label={name}><Icon /></ToolButton>
              <CaretButton aria-label={`${name} options`}><Caret color={name === "Undo" ? "#aaa" : "#444"} /></CaretButton>
            </React.Fragment>
          ))}
          <ToolButton $active aria-label="Select"><CursorIcon /></ToolButton>
          <CaretButton $boxed aria-label="Select options"><Caret /></CaretButton>
          <ToolButton aria-label="Rebuild"><LightIcon /></ToolButton>
          <ToolButton aria-label="File properties"><OptionsIcon /></ToolButton>
          <ToolButton aria-label="Options"><GearIcon /></ToolButton>
          <CaretButton aria-label="Options menu"><Caret /></CaretButton>
        </QuickBar>
        <DocTitle>Shafting.SLDPRT</DocTitle>
        <TopRight>
          <SearchBox>
            <svg width="15" height="15" viewBox="0 0 15 15" aria-hidden="true">
              <rect width="15" height="15" fill="#999" />
              <rect x="1" y="1" width="13" height="13" fill="#222" />
              <path d="M4 3l5 4-5 4M9 11.500h3" fill="none" stroke="#fff" strokeWidth="1.400" />
            </svg>
            <SearchInput placeholder="Search Commands" aria-label="Search Commands" />
            <SearchGo aria-label="Search">
              <Ico>
                <circle cx="7.500" cy="7.500" r="6" stroke="#777" strokeWidth="1.800" />
                <path d="M12 12l5 5" stroke="#777" strokeWidth="2.600" />
              </Ico>
              <Caret color="#777" />
            </SearchGo>
          </SearchBox>
          <WindowButton aria-label="Help">
            <svg width="10" height="14" viewBox="0 0 10 14" aria-hidden="true">
              <path d="M1.500 4C1.500 0 8.500 0 8.500 4c0 2.500-3.500 2.500-3.500 5.500" fill="none" stroke="#666" strokeWidth="2.200" />
              <rect x="3.700" y="11" width="2.600" height="2.600" fill="#666" />
            </svg>
          </WindowButton>
          <WindowButton $w={13} aria-label="Help menu"><Caret /></WindowButton>
          <WindowButton aria-label="Minimize"><MinIcon c="#777" /></WindowButton>
          <WindowButton aria-label="Restore"><RestoreIcon c="#666" /></WindowButton>
          <WindowButton aria-label="Close"><CloseIcon c="#666" /></WindowButton>
        </TopRight>
      </TopBar>

      <Body>
        <SidePanel>
          <PanelGrip><GripDot /></PanelGrip>
          <PanelTabs>
            <PanelTab $selected aria-label="Feature tree"><PartIcon /></PanelTab>
            <PanelTab aria-label="Properties"><ListIcon /></PanelTab>
            <CutTab aria-label="Configurations"><DimIcon /></CutTab>
            <TabScroll>
              <TabScrollButton aria-label="Previous tab">
                <svg width="4" height="6" aria-hidden="true"><path d="M4 0v6L0 3z" fill="#111" /></svg>
              </TabScrollButton>
              <TabScrollButton aria-label="Next tab">
                <svg width="4" height="6" aria-hidden="true"><path d="M0 0v6l4-3z" fill="#111" /></svg>
              </TabScrollButton>
            </TabScroll>
          </PanelTabs>
          <FilterBox><FilterIcon /><FilterInput aria-label="Filter tree" /></FilterBox>
          <Tree>
            <TreeRow $root><PartIcon />{"Shafting   (Default<<"}</TreeRow>
            {nodes.map(([kind, label, open]) => {
              const Icon = icons[kind];
              return (
                <TreeRow key={label}>
                  <Twisty as={open ? "button" : "span"} aria-label={open ? `Expand ${label}` : undefined}>
                    {open && <svg width="4" height="7" aria-hidden="true"><path d="M0 0v7l4-3.500z" fill="#555" /></svg>}
                  </Twisty>
                  <Icon />
                  {label}
                </TreeRow>
              );
            })}
          </Tree>
          <HScroll>
            <HScrollButton aria-label="Scroll left">
              <svg width="6" height="9" aria-hidden="true"><path d="M5 1L1.500 4.500 5 8" fill="none" stroke="#444" strokeWidth="1.800" /></svg>
            </HScrollButton>
            <HScrollThumb />
            <HScrollButton aria-label="Scroll right">
              <svg width="6" height="9" aria-hidden="true"><path d="M1 1l3.500 3.500L1 8" fill="none" stroke="#444" strokeWidth="1.800" /></svg>
            </HScrollButton>
          </HScroll>
        </SidePanel>

        <Viewport>
          <Shaft />
          <HudBar>
            {hudTools.map((t) => (
              <React.Fragment key={t.name}>
                <HudButton $active={t.active} aria-label={t.name}>{t.icon}</HudButton>
                {t.menu && <CaretButton aria-label={`${t.name} options`}><Caret color="#999" /></CaretButton>}
              </React.Fragment>
            ))}
          </HudBar>
          <DocControls>
            <WindowButton aria-label="Dock left"><DockIcon /></WindowButton>
            <WindowButton aria-label="Dock right"><DockIcon right /></WindowButton>
            <WindowButton aria-label="Minimize document"><MinIcon c="#999" /></WindowButton>
            <WindowButton aria-label="Restore document"><RestoreIcon c="#999" /></WindowButton>
            <WindowButton aria-label="Close document"><CloseIcon c="#999" /></WindowButton>
          </DocControls>
          <TaskTabs>
            {taskTabs.map(([name, Icon]) => (
              <TaskTab key={name} $selected={name === "Appearances"} aria-label={name}><Icon /></TaskTab>
            ))}
          </TaskTabs>
          <SideHandle aria-label="Collapse panel"><GripDot /></SideHandle>
          <ViewName>*Front</ViewName>
        </Viewport>
      </Body>

      <SplitLine />
      <StudyTabs>
        <StudyNav>
          {["M5 1v6L2 4zM1 1v6", "M4 1v6L1 4z", "M2 1v6l3-3z", "M1 1v6l3-3zM5 1v6"].map((d, i) => (
            <StudyNavButton key={d} aria-label={["First", "Previous", "Next", "Last"][i]}>
              <svg width="6" height="8" aria-hidden="true"><path d={d} fill="#808080" stroke="#808080" /></svg>
            </StudyNavButton>
          ))}
        </StudyNav>
        <StudyTab $selected>Model</StudyTab>
        <StudyTab>3D Views</StudyTab>
        <StudyTab>Motion Study 1</StudyTab>
      </StudyTabs>
      <StatusBar>
        <StatusText>SOLIDWORKS Premium 2016 x64 Edition</StatusText>
        <StatusGap $w={8} />
        <StatusCell>Editing Part</StatusCell>
        <StatusGap $w={16} />
        <UnitsButton>MMGS <Caret up /></UnitsButton>
        <TagButton aria-label="Tags"><TagIcon /></TagButton>
      </StatusBar>
    </Shell>
  );
}
